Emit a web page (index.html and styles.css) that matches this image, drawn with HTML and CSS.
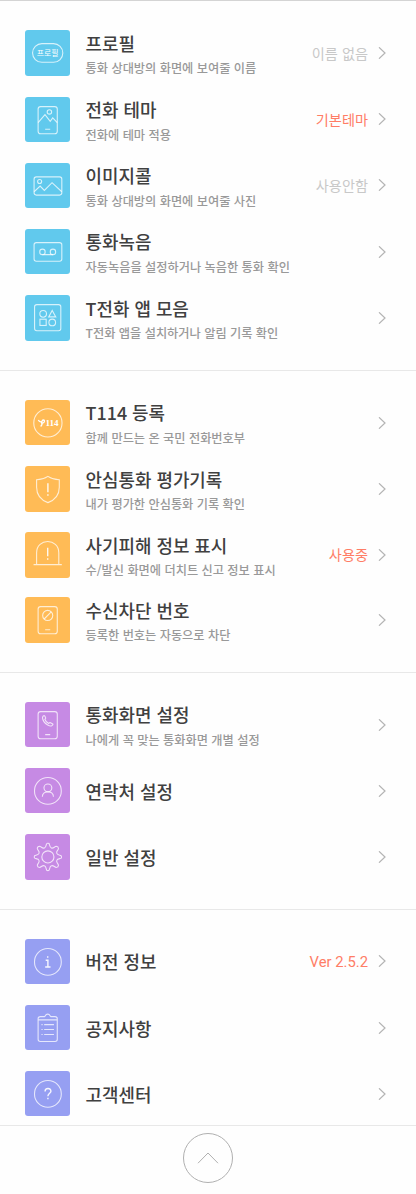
FILE: index.html
```
<!DOCTYPE html>
<html lang="ko">
<head>
    <meta charset="UTF-8">
    <meta name="viewport" content="width=device-width, initial-scale=1.0">
    <title>설정</title>
    <link rel="stylesheet" href="styles.css">
</head>
<body>
    <main class="settings">
        <section class="group blue">
            <a class="row">
                <svg class="icon" viewBox="0 0 45 45"><rect x="7.5" y="13.5" width="30" height="18.5" rx="9.25"/><text class="label" x="22.5" y="25.5">프로필</text></svg>
                <div class="text"><h2>프로필</h2><p>통화 상대방의 화면에 보여줄 이름</p></div>
                <span class="value">이름 없음</span>
                <svg class="arrow" viewBox="0 0 8 12"><path d="M1 .3 7 6 1 11.7"/></svg>
            </a>
            <a class="row">
                <svg class="icon" viewBox="0 0 45 45"><rect x="13" y="9.5" width="19" height="27" rx="2.5"/><circle cx="24.2" cy="14.8" r="2.2"/><path d="M13 25.5 19.8 17.5 25 24.2 27.5 20.8 32 25.5M20 32h5"/></svg>
                <div class="text"><h2>전화 테마</h2><p>전화에 테마 적용</p></div>
                <span class="value on">기본테마</span>
                <svg class="arrow" viewBox="0 0 8 12"><path d="M1 .3 7 6 1 11.7"/></svg>
            </a>
            <a class="row">
                <svg class="icon" viewBox="0 0 45 45"><rect x="9" y="13.8" width="27.5" height="18" rx="2.2"/><circle cx="14.5" cy="18.3" r="2"/><path d="M9 28.5 15 22.8 19.2 27.2 26.8 19.5 36.5 28.5"/></svg>
                <div class="text"><h2>이미지콜</h2><p>통화 상대방의 화면에 보여줄 사진</p></div>
                <span class="value">사용안함</span>
                <svg class="arrow" viewBox="0 0 8 12"><path d="M1 .3 7 6 1 11.7"/></svg>
            </a>
            <a class="row">
                <svg class="icon" viewBox="0 0 45 45"><rect x="9" y="13.5" width="27.5" height="18.5" rx="2.2"/><circle cx="17.3" cy="22.7" r="2.7"/><circle cx="27.7" cy="22.7" r="2.7"/><path d="M17.3 25.4h10.4"/></svg>
                <div class="text"><h2>통화녹음</h2><p>자동녹음을 설정하거나 녹음한 통화 확인</p></div>
                <svg class="arrow" viewBox="0 0 8 12"><path d="M1 .3 7 6 1 11.7"/></svg>
            </a>
            <a class="row">
                <svg class="icon" viewBox="0 0 45 45"><rect x="9.5" y="9.5" width="26" height="26" rx="2.2"/><circle cx="18" cy="18.7" r="3.3"/><path d="M27 15.3 30.5 21.7H23.5Z"/><rect x="14.8" y="24" width="6.2" height="6.2"/><circle cx="27" cy="27.2" r="3.3"/></svg>
                <div class="text"><h2>T전화 앱 모음</h2><p>T전화 앱을 설치하거나 알림 기록 확인</p></div>
                <svg class="arrow" viewBox="0 0 8 12"><path d="M1 .3 7 6 1 11.7"/></svg>
            </a>
        </section>

        <section class="group orange">
            <a class="row">
                <svg class="icon" viewBox="0 0 45 45"><circle cx="22.7" cy="22.7" r="14"/><path class="mark" d="M13.2 19.8C14.5 22.3 16.5 22 17 20.8 17.600 19.400 19.300 19.500 19.300 20.900 19.300 22.600 17.500 23 16.800 22.600M16.300 22C17.300 23.600 16.800 25.200 15.500 26.200"/><text class="num" x="26.8" y="26.2">114</text></svg>
                <div class="text"><h2>T114 등록</h2><p>함께 만드는 온 국민 전화번호부</p></div>
                <svg class="arrow" viewBox="0 0 8 12"><path d="M1 .3 7 6 1 11.7"/></svg>
            </a>
            <a class="row">
                <svg class="icon" viewBox="0 0 45 45"><path d="M22.7 10.3C19 12.8 15.5 13.5 11.5 13.7V21C11.5 28.5 15.5 33.5 22.7 36.3 30 33.5 34 28.5 34 21V13.7C30 13.5 26.5 12.8 22.7 10.3Z"/><path class="bang" d="M22.7 17v9M22.7 28v1.6"/></svg>
                <div class="text"><h2>안심통화 평가기록</h2><p>내가 평가한 안심통화 기록 확인</p></div>
                <svg class="arrow" viewBox="0 0 8 12"><path d="M1 .3 7 6 1 11.7"/></svg>
            </a>
            <a class="row">
                <svg class="icon" viewBox="0 0 45 45"><path d="M11.5 32.3V20.5C11.5 5.8 33.5 5.8 33.5 20.5V32.3M8.5 32.3h28"/><path class="bang" d="M22.5 15.5v8.5M22.5 26v1.6"/></svg>
                <div class="text"><h2>사기피해 정보 표시</h2><p>수/발신 화면에 더치트 신고 정보 표시</p></div>
                <span class="value on">사용중</span>
                <svg class="arrow" viewBox="0 0 8 12"><path d="M1 .3 7 6 1 11.7"/></svg>
            </a>
            <a class="row tight">
                <svg class="icon" viewBox="0 0 45 45"><rect x="13" y="9.5" width="19" height="27" rx="2.5"/><circle cx="22.5" cy="18.3" r="5"/><path d="M19 21.8 26 14.8M20 32.5h5"/></svg>
                <div class="text"><h2>수신차단 번호</h2><p>등록한 번호는 자동으로 차단</p></div>
                <svg class="arrow" viewBox="0 0 8 12"><path d="M1 .3 7 6 1 11.7"/></svg>
            </a>
        </section>

        <section class="group purple">
            <a class="row">
                <svg class="icon" viewBox="0 0 45 45"><rect x="13" y="9.5" width="19" height="27" rx="2.5"/><path d="M17.8 14.2 19 13.5Q19.8 13.5 20.5 15.7 20.7 16.5 19.7 17.1 20.7 20 23.5 21.3 24.5 20.2 25.3 20.6L27.5 21.8Q28.2 22.5 26.5 23.5 25 24.2 22.5 22.8 18.5 20.5 17.5 16.7 17.1 15 17.8 14.2ZM20 32.3h5"/></svg>
                <div class="text"><h2>통화화면 설정</h2><p>나에게 꼭 맞는 통화화면 개별 설정</p></div>
                <svg class="arrow" viewBox="0 0 8 12"><path d="M1 .3 7 6 1 11.7"/></svg>
            </a>
            <a class="row">
                <svg class="icon" viewBox="0 0 45 45"><circle cx="22.7" cy="22.7" r="13.3"/><circle cx="22.7" cy="19.7" r="3.9"/><path d="M17.2 28.5C17.2 22 28.2 22 28.2 28.5"/></svg>
                <div class="text single"><h2>연락처 설정</h2></div>
                <svg class="arrow" viewBox="0 0 8 12"><path d="M1 .3 7 6 1 11.7"/></svg>
            </a>
            <a class="row">
                <svg class="icon" viewBox="0 0 45 45">
                    <defs><path id="teeth" d="M-1.2-13.2Q0-13.9 1.2-13.2C1.9-12.2 1.6-9.5 3.5-8.8 5.5-7.9 6.6-10.4 8.3-10.5Q10.4-10.4 10.5-8.3C10.4-6.6 7.9-5.5 8.8-3.5 9.5-1.6 12.2-1.9 13.2-1.2"/></defs>
                    <g transform="translate(22.7 22.7)"><circle r="6"/><use href="#teeth"/><use href="#teeth" transform="rotate(90)"/><use href="#teeth" transform="rotate(180)"/><use href="#teeth" transform="rotate(270)"/></g>
                </svg>
                <div class="text single"><h2>일반 설정</h2></div>
                <svg class="arrow" viewBox="0 0 8 12"><path d="M1 .3 7 6 1 11.7"/></svg>
            </a>
        </section>

        <section class="group indigo">
            <a class="row">
                <svg class="icon" viewBox="0 0 45 45"><circle cx="22.7" cy="22.7" r="13.3"/><path class="bang" d="M22.5 17v1.6M20.5 21h2.2v6.7M20 27.8h5.3"/></svg>
                <div class="text single"><h2>버전 정보</h2></div>
                <span class="value on version">Ver 2.5.2</span>
                <svg class="arrow" viewBox="0 0 8 12"><path d="M1 .3 7 6 1 11.7"/></svg>
            </a>
            <a class="row">
                <svg class="icon" viewBox="0 0 45 45"><path d="M19.5 11.5H15.2Q13 11.5 13 13.7V34Q13 36.2 15.2 36.2H29.8Q32 36.2 32 34V13.7Q32 11.5 29.8 11.5H25.5C24.7 11.5 25 9 22.5 9S20.3 11.5 19.5 11.5ZM13 14.8h19M19 19.5h9.7M19 24.3h9.7M19 29.2h9.7M16.3 19.5h1.2M16.3 24.3h1.2M16.3 29.2h1.2"/></svg>
                <div class="text single"><h2>공지사항</h2></div>
                <svg class="arrow" viewBox="0 0 8 12"><path d="M1 .3 7 6 1 11.7"/></svg>
            </a>
            <a class="row">
                <svg class="icon" viewBox="0 0 45 45"><circle cx="22.7" cy="22.7" r="13.3"/><path class="bang" d="M19.9 20.3C19.9 16.4 25.7 16.4 25.7 20 25.7 22 22.7 22.2 22.7 25M22.7 26.5v1.6"/></svg>
                <div class="text single"><h2>고객센터</h2></div>
                <svg class="arrow" viewBox="0 0 8 12"><path d="M1 .3 7 6 1 11.7"/></svg>
            </a>
        </section>
    </main>

    <footer class="bottom">
        <button class="top-button" aria-label="맨 위로">
            <svg viewBox="0 0 22 12"><path d="M1 11.2 11 1 21 11.2"/></svg>
        </button>
    </footer>
</body>
</html>
```
FILE: styles.css
```
* {
    box-sizing: border-box;
}
body {
    margin: 0;
    background: #fefefe;
    color: #404040;
    font-family: "Noto Sans CJK KR", sans-serif;
}
.settings {
    border-top: 1px solid #d4d4d4;
}
.group {
    display: flex;
    flex-direction: column;
    gap: 20.8px;
    padding: 29px 30px 29px 25px;
    border-bottom: 1px solid #e8e8e8;
}
.blue {
    padding-top: 29.4px;
    padding-bottom: 29.4px;
}
.indigo {
    padding-bottom: 9px;
}
.row {
    display: flex;
    align-items: center;
    height: 45.4px;
}
.row.tight {
    margin-top: -1px;
}
.icon {
    flex: none;
    width: 45.4px;
    height: 45.4px;
    border-radius: 3px;
    fill: none;
    stroke: #fff;
    stroke-opacity: 0.75;
    stroke-width: 1.1;
}
.blue .icon {
    background: #61c9ed;
}
.orange .icon {
    background: #ffbb56;
}
.purple .icon {
    background: #c68ae4;
}
.indigo .icon {
    background: #969ff2;
}
.icon .bang {
    stroke-opacity: 0.9;
    stroke-width: 1.4;
}
.icon .mark {
    stroke-opacity: 1;
    stroke-width: 1.3;
}
.icon text {
    fill: #fff;
    stroke: none;
    text-anchor: middle;
}
.label {
    font-size: 7.8px;
}
.num {
    font-family: "Liberation Serif", serif;
    font-size: 9px;
    font-weight: bold;
}
.text {
    flex: 1;
    margin-left: 15.2px;
    padding-top: 4px;
    white-space: nowrap;
}
.text.single {
    padding-top: 0;
}
h2 {
    margin: 0;
    font-size: 17.9px;
    font-weight: 500;
    line-height: 26px;
}
p {
    margin: 1.5px 0 0;
    color: #999;
    font-size: 12.2px;
    font-weight: 500;
    line-height: 23px;
}
.value {
    color: #c8c8c8;
    font-size: 14.2px;
    line-height: 20px;
    margin-top: -1px;
}
.value.on {
    color: #ff7d66;
}
.value.version {
    margin-top: 1px;
    font-family: Roboto, sans-serif;
    font-size: 14.8px;
}
.arrow {
    width: 8px;
    height: 12px;
    margin-left: 10px;
    fill: none;
    stroke: #b4b4b4;
    stroke-width: 1.2;
}
.bottom {
    display: flex;
    justify-content: center;
    padding-top: 7px;
}
.top-button {
    display: flex;
    align-items: center;
    justify-content: center;
    width: 50px;
    height: 50px;
    padding: 0;
    border: 1px solid #b0b0b0;
    border-radius: 50%;
    background: none;
}
.top-button svg {
    width: 22px;
    height: 12px;
    fill: none;
    stroke: #b0b0b0;
}
```
